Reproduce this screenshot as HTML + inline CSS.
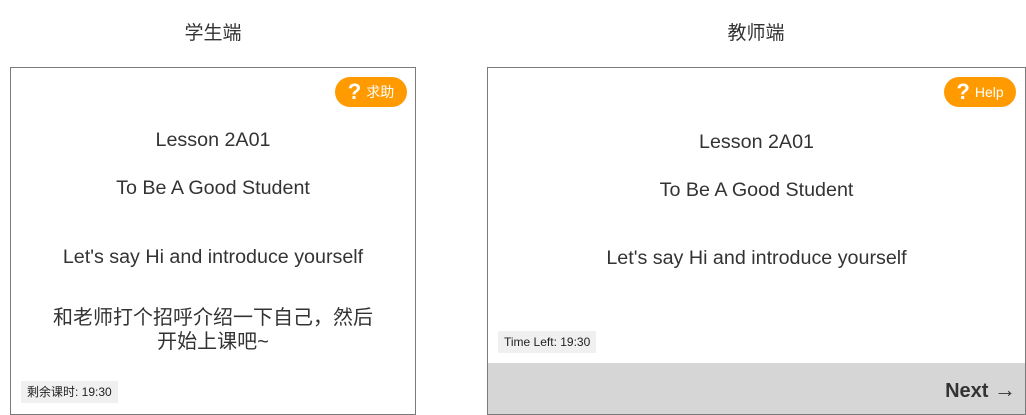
<!DOCTYPE html>
<html><head><meta charset="utf-8"><style>
body{margin:0;width:1026px;height:415px;background:#fff;position:relative;overflow:hidden;font-family:"Liberation Sans","Noto Sans CJK SC",sans-serif;color:#333}
.a{position:absolute}
.t{position:absolute;text-align:center;font-size:19.7px;line-height:24px;white-space:nowrap}
.box{position:absolute;border:1px solid #7a7a7a;box-sizing:border-box;background:#fff}
.help{position:absolute;background:#ff9b00;border-radius:15px;color:#fff;font-size:14px;height:30px;width:72px;display:flex;align-items:center;justify-content:center}
.help b{font-size:22px;margin-right:5px;font-weight:bold}
.tm{position:absolute;background:#f0f0f0;font-size:12px;line-height:22px;padding:0 6px;color:#222}
</style></head><body>
<div class="t" style="left:113px;width:200px;top:22px;font-size:19px">学生端</div>
<div class="t" style="left:656px;width:200px;top:22px;font-size:19px">教师端</div>

<div class="box" style="left:10px;top:67px;width:406px;height:348px"></div>
<div class="help" style="left:335px;top:77px">
<b>?</b>求助</div>
<div class="t" style="left:13px;width:400px;top:128px">Lesson 2A01</div>
<div class="t" style="left:13px;width:400px;top:176px">To Be A Good Student</div>
<div class="t" style="left:13px;width:400px;top:245px">Let's say Hi and introduce yourself</div>
<div class="t" style="left:13px;width:400px;top:306px;font-size:20px">和老师打个招呼介绍一下自己，然后<br>开始上课吧~</div>
<div class="tm" style="left:21px;top:381px">剩余课时: 19:30</div>

<div class="box" style="left:487px;top:67px;width:539px;height:348px"></div>
<div class="a" style="left:488px;top:363px;width:537px;height:51px;background:#d6d6d6"></div>
<div class="help" style="left:944px;top:77px"><b>?</b>Help</div>
<div class="t" style="left:487px;width:539px;top:130px">Lesson 2A01</div>
<div class="t" style="left:487px;width:539px;top:178px">To Be A Good Student</div>
<div class="t" style="left:487px;width:539px;top:246px">Let's say Hi and introduce yourself</div>
<div class="tm" style="left:498px;top:331px">Time Left: 19:30</div>
<div class="a" style="right:10px;top:377px;font-size:20px;font-weight:bold;color:#333">Next <span style="font-weight:normal;font-size:22px">→</span></div>
</body></html>
